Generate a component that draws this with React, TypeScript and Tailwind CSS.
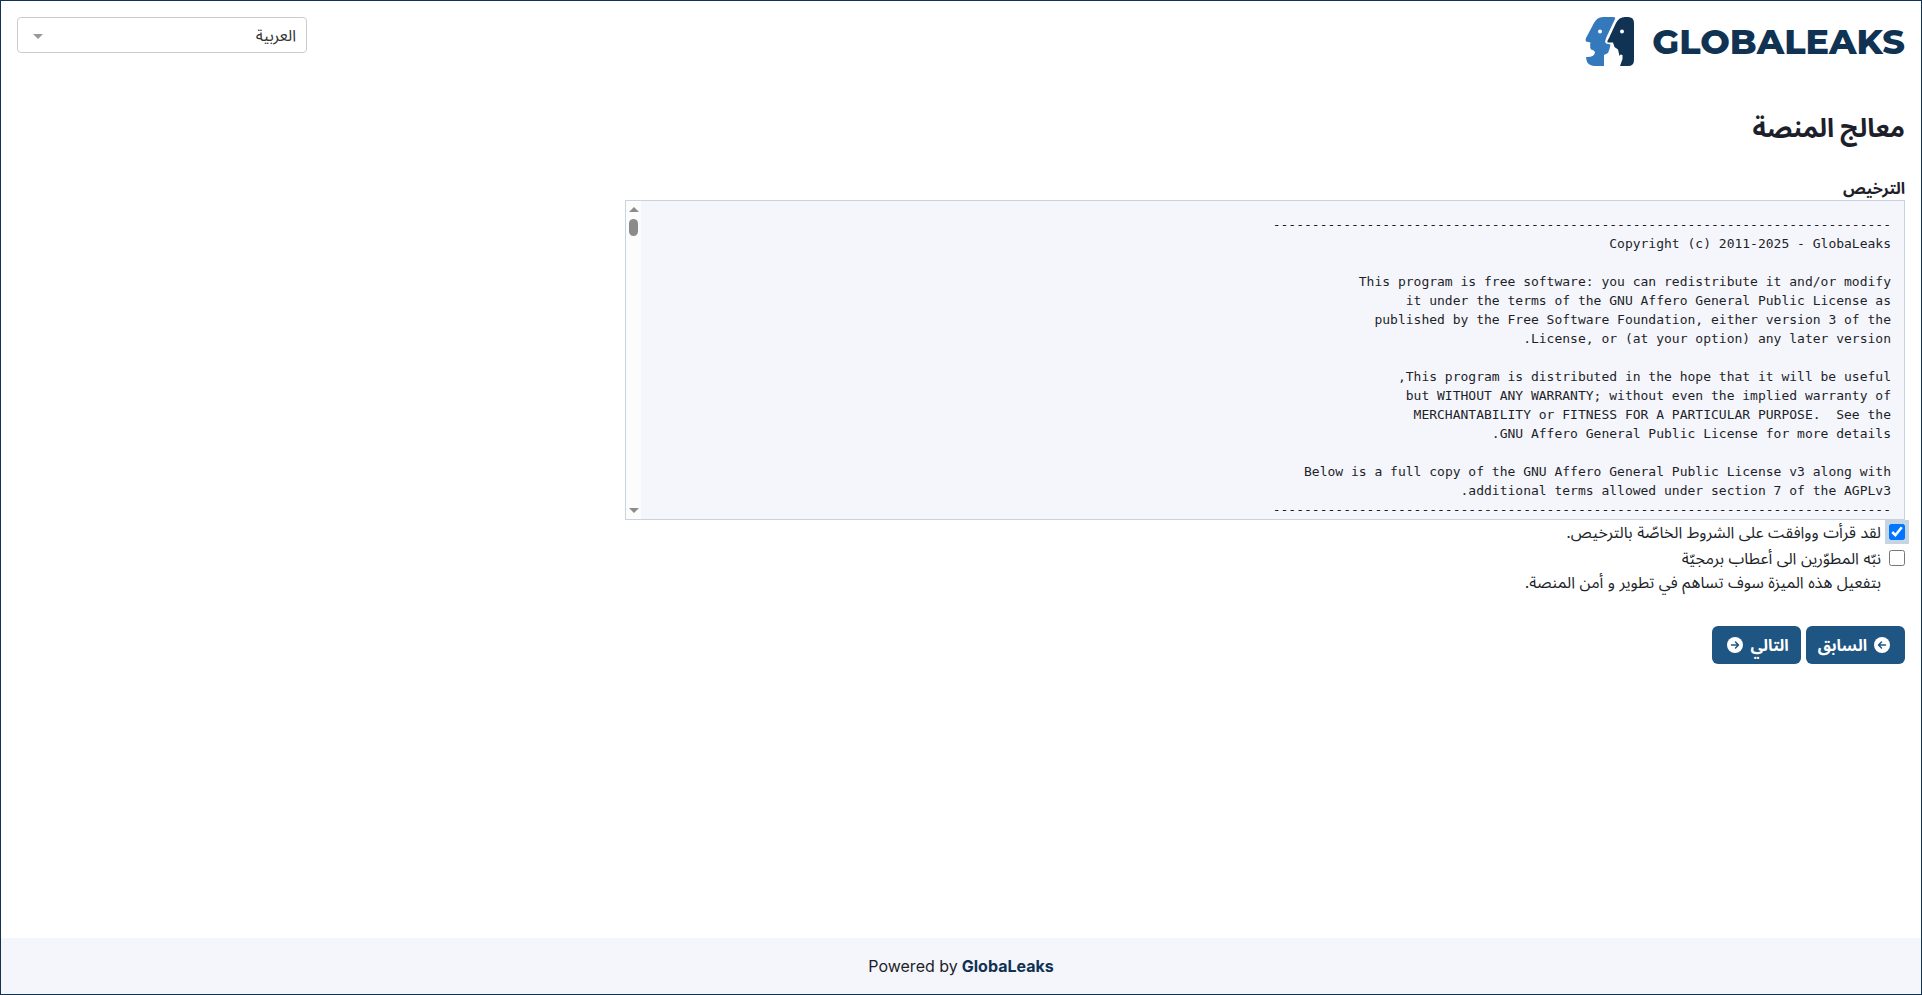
import { useState } from 'react';

const RULE = '-'.repeat(79);

const LICENSE = `${RULE}
Copyright (c) 2011-2025 - GlobaLeaks

This program is free software: you can redistribute it and/or modify
it under the terms of the GNU Affero General Public License as
published by the Free Software Foundation, either version 3 of the
License, or (at your option) any later version.

This program is distributed in the hope that it will be useful,
but WITHOUT ANY WARRANTY; without even the implied warranty of
MERCHANTABILITY or FITNESS FOR A PARTICULAR PURPOSE.  See the
GNU Affero General Public License for more details.

Below is a full copy of the GNU Affero General Public License v3 along with
additional terms allowed under section 7 of the AGPLv3.
${RULE}
`;

function Logo(): JSX.Element {
  return (
    <a href="/" dir="ltr" className="flex items-center gap-[18px] text-[#103253]">
      <svg viewBox="0 0 49 49" className="size-[49px]" aria-hidden="true">
        <path
          fill="#3579bd"
          d="M18 0H28Q31 0 30 2L21.500 20L20 24.500L21 26.500L25.500 27.500L24.500 32L23 36L19 38V49H9Q2 48 1.500 43L1 40Q9 40.500 10 35.500Q9.500 33 6 32.500L5 30Q6 29 5 28L5.500 25.500L1 24.500Q0 23.500 1 21L9 6Q12 0 18 0Z"
        />
        <path
          fill="#103253"
          d="M40 0H43Q49 0 49 6V43Q49 49 43 49H35L37.500 42V38L35.500 37.500L34.500 39L33 32.500L29.500 30L28 25.500H22.500Q22 24 24 21L31 6Q34 0 40 0Z"
        />
        <circle cx="15" cy="14.500" r="2" fill="#fff" />
        <circle cx="37" cy="14.500" r="2" fill="#fff" />
      </svg>
      <span className="font-['Montserrat','Inter',sans-serif] text-[35px] leading-[49px] font-extrabold">
        GLOBALEAKS
      </span>
    </a>
  );
}

function ArrowCircle({ className }: { className?: string }): JSX.Element {
  return (
    <svg viewBox="0 0 16 16" className={`size-4 ${className ?? ''}`} aria-hidden="true">
      <circle cx="8" cy="8" r="8" fill="currentColor" />
      <path
        d="M4.500 8H11.500M8.500 5L11.500 8L8.500 11"
        fill="none"
        stroke="#1f5582"
        strokeWidth="1.500"
        strokeLinecap="round"
        strokeLinejoin="round"
      />
    </svg>
  );
}

function ScrollBar(): JSX.Element {
  return (
    <div
      aria-hidden="true"
      className="pointer-events-none absolute inset-y-px left-px flex w-[15px] flex-col items-center bg-[#fcfcfc] py-[6px]"
    >
      <span className="border-x-5 border-b-5 border-x-transparent border-b-[#8b8b8b]" />
      <span className="mt-[7px] h-[17px] w-[9px] rounded-full bg-[#8b8b8b]" />
      <span className="mt-auto border-x-5 border-t-5 border-x-transparent border-t-[#8b8b8b]" />
    </div>
  );
}

export default function App(): JSX.Element {
  const [accepted, setAccepted] = useState(true);
  const [reports, setReports] = useState(false);

  return (
    <div
      dir="rtl"
      lang="ar"
      className="flex min-h-screen flex-col border border-[#103253] bg-white font-['Inter','Noto_Sans_Arabic','Noto_Sans',sans-serif] text-base text-[#1d1f2a]"
    >
      <header className="flex items-start justify-between p-4">
        <Logo />
        <div className="relative">
          <select
            aria-label="اللغة"
            className="h-9 w-[290px] appearance-none rounded border border-[#ccc] bg-white px-[10px] text-[#333]"
          >
            <option>العربية</option>
          </select>
          <span className="pointer-events-none absolute top-[17px] left-4 border-x-5 border-t-5 border-x-transparent border-t-[#999]" />
        </div>
      </header>

      <main className="flex-1 px-4 pt-[26px]">
        <h1 className="text-[26px] leading-10 font-bold">معالج المنصة</h1>
        <div className="mt-7 w-full max-w-[1280px]">
          <label htmlFor="license" className="block font-bold">
            الترخيص
          </label>
          <div className="relative">
            <textarea
              id="license"
              readOnly
              value={LICENSE}
              className="block h-80 w-full resize-none overflow-y-scroll border border-[#c7d3e1] bg-[#f5f6fb] px-[13px] py-[14px] font-['DejaVu_Sans_Mono',monospace] text-[13px] leading-[19px] outline-none"
            />
            <ScrollBar />
          </div>
        </div>
        <div className="flex gap-2">
          <input
            id="accept"
            type="checkbox"
            checked={accepted}
            onChange={(e) => setAccepted(e.target.checked)}
            className="mt-1 size-4 shadow-[0_0_0_4px_#c7d4e1]"
          />
          <label htmlFor="accept">لقد قرأت ووافقت على الشروط الخاصّة بالترخيص.</label>
        </div>
        <div className="mt-[2px] flex gap-2">
          <input
            id="reports"
            type="checkbox"
            checked={reports}
            onChange={(e) => setReports(e.target.checked)}
            className="mt-1 size-4"
          />
          <label htmlFor="reports">
            نبّه المطوّرين الى أعطاب برمجيّة
            <br />
            بتفعيل هذه الميزة سوف تساهم في تطوير و أمن المنصة.
          </label>
        </div>
        <div className="mt-8 flex gap-[5px] font-bold text-white">
          <button
            type="button"
            className="flex h-[38px] items-center gap-[7px] rounded-md bg-[#1f5582] pr-[15px] pl-3"
          >
            <ArrowCircle className="-scale-x-100" />
            السابق
          </button>
          <button
            type="button"
            className="flex h-[38px] items-center gap-[7px] rounded-md bg-[#1f5582] pr-3 pl-[15px]"
          >
            التالي
            <ArrowCircle />
          </button>
        </div>
      </main>

      <footer dir="ltr" className="flex h-14 items-center justify-center gap-1 bg-[#f5f6fb]">
        Powered by
        <a href="https://www.globaleaks.org" className="font-bold text-[#103253]">
          GlobaLeaks
        </a>
      </footer>
    </div>
  );
}
